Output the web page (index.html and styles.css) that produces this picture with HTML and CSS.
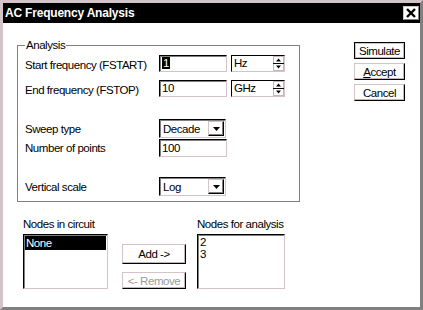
FILE: index.html
```html
<!DOCTYPE html>
<html lang="en">
<head>
  <meta charset="UTF-8" />
  <title>AC Frequency Analysis</title>
  <link rel="stylesheet" href="styles.css">
</head>
<body>
  <div class="window">
    <div class="titlebar">
      <span class="title">AC Frequency Analysis</span>
      <span class="close">
        <svg width="14" height="12" viewBox="0 0 14 12">
          <path d="M3 2 L11 10 M11 2 L3 10" stroke="#000" stroke-width="2.4" />
        </svg>
      </span>
    </div>

    <div class="content">
      <div class="top">
        <fieldset class="group">
          <legend>Analysis</legend>

          <div class="row r-first">
            <label>Start frequency (FSTART)</label>
            <div class="field w68"><span class="sel">1</span></div>
            <div class="spin">
              <span>Hz</span>
              <svg class="spinner" width="11" height="15" viewBox="0 0 11 15">
                <rect x="0.5" y="0.5" width="10" height="14" fill="#fff" stroke="#c8b4b8" />
                <line x1="0" y1="7.5" x2="11" y2="7.5" stroke="#000" />
                <path d="M5.5 2.5 L8 5.5 L3 5.5 Z" fill="#000" />
                <path d="M3 9.5 L8 9.5 L5.5 12.5 Z" fill="#000" />
              </svg>
            </div>
          </div>

          <div class="row r-second">
            <label>End frequency (FSTOP)</label>
            <div class="field w68">10</div>
            <div class="spin">
              <span>GHz</span>
              <svg class="spinner" width="11" height="15" viewBox="0 0 11 15">
                <rect x="0.5" y="0.5" width="10" height="14" fill="#fff" stroke="#c8b4b8" />
                <line x1="0" y1="7.5" x2="11" y2="7.5" stroke="#000" />
                <path d="M5.5 2.5 L8 5.5 L3 5.5 Z" fill="#000" />
                <path d="M3 9.5 L8 9.5 L5.5 12.5 Z" fill="#000" />
              </svg>
            </div>
          </div>

          <div class="row r-sweep">
            <label>Sweep type</label>
            <div class="combo">
              <span>Decade</span>
              <span class="drop">
                <svg width="7" height="4" viewBox="0 0 7 4"><path d="M0 0 L7 0 L3.5 4 Z" fill="#000" /></svg>
              </span>
            </div>
          </div>

          <div class="row r-points">
            <label>Number of points</label>
            <div class="field w68 tall">100</div>
          </div>

          <div class="row r-scale">
            <label>Vertical scale</label>
            <div class="combo">
              <span>Log</span>
              <span class="drop">
                <svg width="7" height="4" viewBox="0 0 7 4"><path d="M0 0 L7 0 L3.5 4 Z" fill="#000" /></svg>
              </span>
            </div>
          </div>
        </fieldset>

        <div class="actions">
          <button class="btn default">Simulate</button>
          <button class="btn"><u>A</u>ccept</button>
          <button class="btn">Cancel</button>
        </div>
      </div>

      <div class="bottom">
        <div class="col">
          <div class="cap">Nodes in circuit</div>
          <div class="list in">
            <div class="item selected">None</div>
          </div>
        </div>

        <div class="mid">
          <button class="btn add">Add -&gt;</button>
          <button class="btn remove" disabled>&lt;- Remove</button>
        </div>

        <div class="col">
          <div class="cap">Nodes for analysis</div>
          <div class="list out">
            <div class="item">2</div>
            <div class="item">3</div>
          </div>
        </div>
      </div>
    </div>
  </div>
</body>
</html>
```

FILE: styles.css
```css
:root {
  --pink: #d4c4c8;
  --pink-dark: #c8b4b8;
  --gray: #808080;
  --text: #000;
}

html, body {
  margin: 0;
  padding: 0;
}

body {
  font-family: "Liberation Sans", Arial, sans-serif;
  font-size: 11.5px;
  letter-spacing: -0.45px;
  color: var(--text);
  background: var(--pink);
  white-space: nowrap;
}

.window {
  width: 423px;
  height: 310px;
  box-sizing: border-box;
  border: 3px solid;
  border-color: var(--pink) var(--gray) var(--gray) var(--pink);
  background: #fff;
  display: flex;
  flex-direction: column;
  overflow: hidden;
}

.titlebar {
  height: 20px;
  flex: none;
  background: #000;
  display: flex;
  align-items: center;
  justify-content: space-between;
  padding: 0 1px 0 2px;
}

.title {
  color: #fff;
  font-weight: bold;
  font-size: 12px;
  letter-spacing: -0.2px;
}

.close {
  width: 16px;
  height: 14px;
  box-sizing: border-box;
  background: #fff;
  border: 1px solid;
  border-color: var(--pink) var(--gray) var(--gray) var(--pink);
  display: flex;
  align-items: center;
  justify-content: center;
}

.close svg {
  display: block;
}

.content {
  flex: 1;
  display: flex;
  flex-direction: column;
}

/* top part: group box and action buttons */
.top {
  display: flex;
  align-items: flex-start;
}

.group {
  margin: 15px 0 0 14px;
  width: 283px;
  box-sizing: border-box;
  border: 1px solid var(--gray);
  padding: 2px 0 5px 7px;
  min-width: 0;
}

.group legend {
  padding: 0 1px;
  margin-left: 0;
  line-height: 14px;
}

.row {
  display: flex;
  align-items: center;
}

.row label {
  width: 134px;
  flex: none;
  line-height: 14px;
}

.r-first label,
.r-second label {
  padding-top: 4px;
}

.r-second { margin-top: 7px; }
.r-sweep  { margin-top: 22px; }
.r-points { margin-top: 1px; }
.r-scale  { margin-top: 20px; }

.field {
  height: 17px;
  box-sizing: border-box;
  border: 1px solid;
  border-color: #000 var(--pink) var(--pink) #000;
  box-shadow: inset 1px 1px 0 var(--gray);
  padding: 0 2px;
  line-height: 15px;
  background: #fff;
}

.field.tall {
  height: 18px;
  line-height: 16px;
}

.w68 { width: 68px; }

.sel {
  background: #000;
  color: #fff;
  padding: 0 1px;
}

.spin {
  margin-left: 4px;
  width: 54px;
  height: 17px;
  box-sizing: border-box;
  border: 1px solid;
  border-color: #000 var(--pink) var(--pink) #000;
  display: flex;
  align-items: center;
  justify-content: space-between;
  padding-left: 2px;
  line-height: 15px;
}

.spinner {
  display: block;
}

.combo {
  width: 67px;
  height: 19px;
  box-sizing: border-box;
  border: 1px solid;
  border-color: #000 var(--pink) var(--pink) #000;
  box-shadow: inset 1px 1px 0 var(--gray);
  display: flex;
  align-items: center;
  justify-content: space-between;
  padding: 0 1px 0 3px;
}

.drop {
  width: 16px;
  height: 15px;
  box-sizing: border-box;
  border: 1px solid;
  border-color: var(--pink) #000 #000 var(--pink);
  box-shadow: inset -1px -1px 0 var(--gray);
  display: flex;
  align-items: center;
  justify-content: center;
}

.drop svg {
  display: block;
}

.actions {
  margin: 19px 0 0 54px;
  display: flex;
  flex-direction: column;
  gap: 4px;
}

.btn {
  font: inherit;
  letter-spacing: inherit;
  color: var(--text);
  background: #fff;
  width: 51px;
  height: 17px;
  box-sizing: border-box;
  padding: 0;
  border: 1px solid;
  border-color: var(--pink) #000 #000 var(--pink);
  box-shadow: inset -1px -1px 0 var(--pink-dark);
  line-height: 14px;
  white-space: nowrap;
  cursor: pointer;
}

.btn.default {
  border: 1px solid #000;
  box-shadow: inset 1px 1px 0 var(--pink), inset -1px -1px 0 var(--pink-dark);
}

/* bottom part: node lists */
.bottom {
  display: flex;
  margin: 15px 0 0 20px;
}

.cap {
  line-height: 14px;
  margin-bottom: 3px;
}

.list {
  height: 55px;
  box-sizing: border-box;
  border: 1px solid;
  border-color: #000 var(--pink) var(--pink) #000;
  box-shadow: inset 1px 1px 0 var(--gray);
  padding: 1px 1px 0 1px;
}

.list.in { width: 85px; }
.list.out { width: 88px; }

.item {
  line-height: 12px;
  padding-left: 1px;
}

.item.selected {
  background: #000;
  color: #fff;
  line-height: 14px;
}

.mid {
  margin: 27px 11px 0 14px;
  display: flex;
  flex-direction: column;
  width: 64px;
}

.btn.add {
  width: 64px;
  height: 20px;
}

.btn.remove {
  width: 64px;
  margin-top: 8px;
  color: #9a9a9a;
  text-shadow: 1px 1px 0 #fff;
  cursor: default;
}
```
